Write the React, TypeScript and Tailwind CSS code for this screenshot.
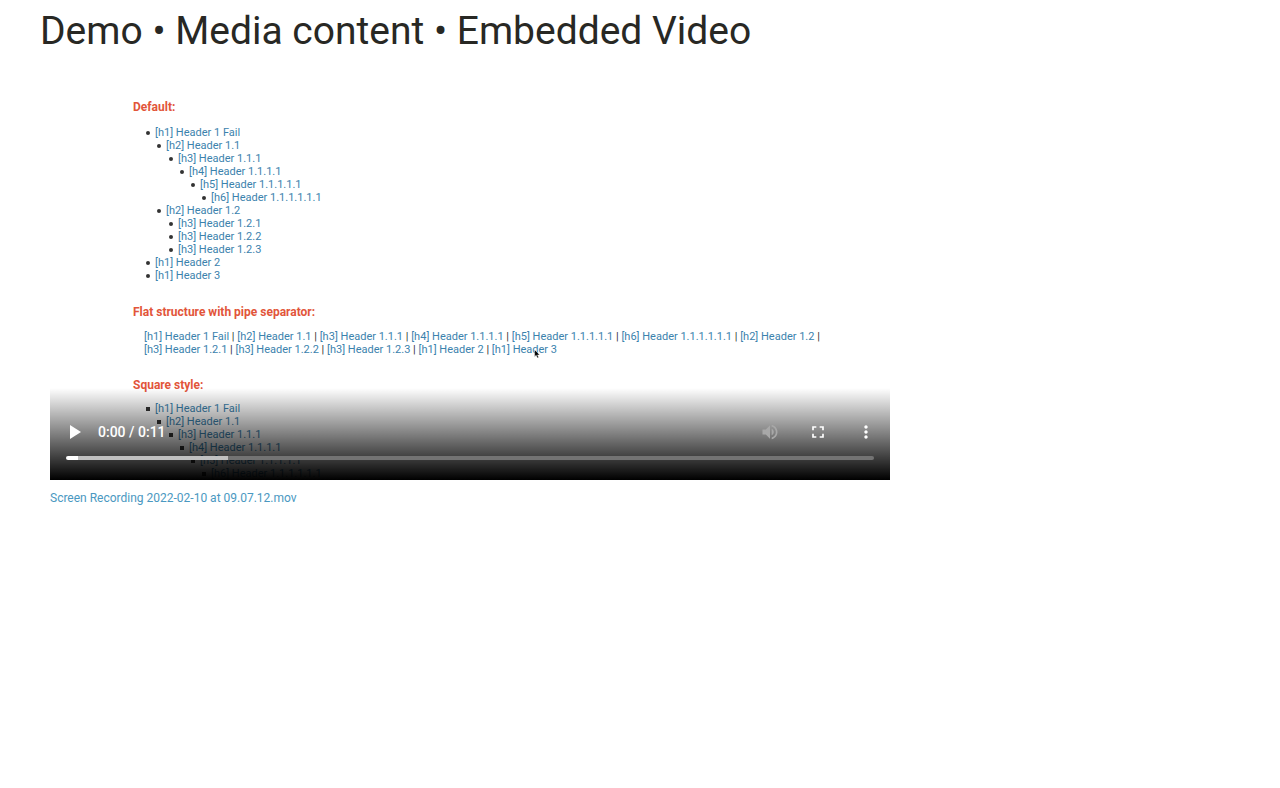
type Item = { level: number; text: string };

const headers: Item[] = [
  { level: 1, text: 'Header 1 Fail' },
  { level: 2, text: 'Header 1.1' },
  { level: 3, text: 'Header 1.1.1' },
  { level: 4, text: 'Header 1.1.1.1' },
  { level: 5, text: 'Header 1.1.1.1.1' },
  { level: 6, text: 'Header 1.1.1.1.1.1' },
  { level: 2, text: 'Header 1.2' },
  { level: 3, text: 'Header 1.2.1' },
  { level: 3, text: 'Header 1.2.2' },
  { level: 3, text: 'Header 1.2.3' },
  { level: 1, text: 'Header 2' },
  { level: 1, text: 'Header 3' },
];

const indents = ['pl-[13px]', 'pl-[24px]', 'pl-[36px]', 'pl-[47px]', 'pl-[58px]', 'pl-[69px]'];

function HeaderLink({ item }: { item: Item }) {
  return (
    <a href="#" className="whitespace-nowrap text-[#3b82ad]">
      [h{item.level}] {item.text}
    </a>
  );
}

function Outline({ items, square = false }: { items: Item[]; square?: boolean }) {
  return (
    <ul className={square ? 'mt-[10px]' : 'mt-3'}>
      {items.map((item, i) => (
        <li key={i} className={`flex items-center ${indents[item.level - 1]}`}>
          <span className={square ? 'mr-[5px] size-1 bg-[#333]' : 'mr-[5px] size-1 rounded-full bg-[#333]'} />
          <HeaderLink item={item} />
        </li>
      ))}
    </ul>
  );
}

function SectionTitle({ children }: { children: string }) {
  return <h2 className="text-[12px] leading-[14px] font-bold text-[#e2553a]">{children}</h2>;
}

function Controls() {
  return (
    <div className="absolute inset-x-0 bottom-0 flex h-[92px] flex-col justify-end bg-linear-to-b from-transparent to-black px-4 pb-5 font-[Roboto,sans-serif] text-white">
      <div className="flex h-12 items-center">
        <button type="button" aria-label="Play" className="-ml-1 mr-3">
          <svg viewBox="0 0 24 24" className="size-6 fill-current"><path d="M8 5v14l11-7z" /></svg>
        </button>
        <span className="text-[14px] font-medium">0:00 / 0:11</span>
        <div className="ml-auto flex items-center gap-7">
          <button type="button" aria-label="Mute" disabled className="text-[#a8a8a8]">
            <svg viewBox="0 0 24 24" className="size-5 fill-current">
              <path d="M3 9v6h4l5 5V4L7 9H3zm13.5 3c0-1.77-1.02-3.29-2.5-4.03v8.05c1.48-.73 2.5-2.25 2.5-4.02zM14 3.23v2.06c2.89.86 5 3.54 5 6.71s-2.11 5.85-5 6.71v2.06c4.01-.91 7-4.49 7-8.77s-2.99-7.86-7-8.77z" />
            </svg>
          </button>
          <button type="button" aria-label="Full screen">
            <svg viewBox="0 0 24 24" className="size-5 fill-current">
              <path d="M7 14H5v5h5v-2H7v-3zm-2-4h2V7h3V5H5v5zm12 7h-3v2h5v-5h-2v3zM14 5v2h3v3h2V5h-5z" />
            </svg>
          </button>
          <button type="button" aria-label="More options" className="-mr-0.5">
            <svg viewBox="0 0 24 24" className="size-5 fill-current">
              <path d="M12 8c1.1 0 2-.9 2-2s-.9-2-2-2-2 .9-2 2 .9 2 2 2zm0 2c-1.1 0-2 .9-2 2s.9 2 2 2 2-.9 2-2-.9-2-2-2zm0 6c-1.1 0-2 .9-2 2s.9 2 2 2 2-.9 2-2-.9-2-2-2z" />
            </svg>
          </button>
        </div>
      </div>
      <input
        type="range"
        aria-label="Seek"
        min={0}
        max={11}
        defaultValue={0}
        className="block h-1 w-full appearance-none rounded-full bg-[linear-gradient(to_right,#fff_12px,#c0c0c0_12px,#c0c0c0_20%,#737373_20%)] [&::-webkit-slider-thumb]:appearance-none"
      />
    </div>
  );
}

export default function App() {
  return (
    <main className="min-h-screen bg-white px-10 pt-2 font-[Roboto,sans-serif]">
      <h1 className="text-[39px] leading-[46px] text-[#282824]">Demo • Media content • Embedded Video</h1>
      <figure className="mt-[14px] max-w-[860px] px-[10px]">
        <div className="relative h-[412px] overflow-hidden bg-white pt-8 pl-[83px] text-[11px] leading-[13px] text-[#333]">
          <SectionTitle>Default:</SectionTitle>
          <Outline items={headers} />
          <div className="mt-[23px]">
            <SectionTitle>Flat structure with pipe separator:</SectionTitle>
          </div>
          <p className="mt-[11px] mr-[60px] ml-[11px]">
            {headers.map((item, i) => (
              <span key={i}>
                <HeaderLink item={item} />
                {i < headers.length - 1 ? ' | ' : ''}
              </span>
            ))}
          </p>
          <div className="mt-[22px]">
            <SectionTitle>Square style:</SectionTitle>
          </div>
          <Outline items={headers.slice(0, 6)} square />
          <svg viewBox="0 0 8 11" className="absolute top-[281px] left-[484px] h-[10px] w-[7px]">
            <path d="M.7.5v8l1.8-1.6L3.8 10l1.5-.7-1.3-2.8h2.5z" fill="#000" stroke="#fff" strokeWidth=".5" />
          </svg>
          <Controls />
        </div>
        <figcaption className="mt-2 text-[12px] leading-5">
          <a href="#" className="text-[#4a98c1]">Screen Recording 2022-02-10 at 09.07.12.mov</a>
        </figcaption>
      </figure>
    </main>
  );
}
